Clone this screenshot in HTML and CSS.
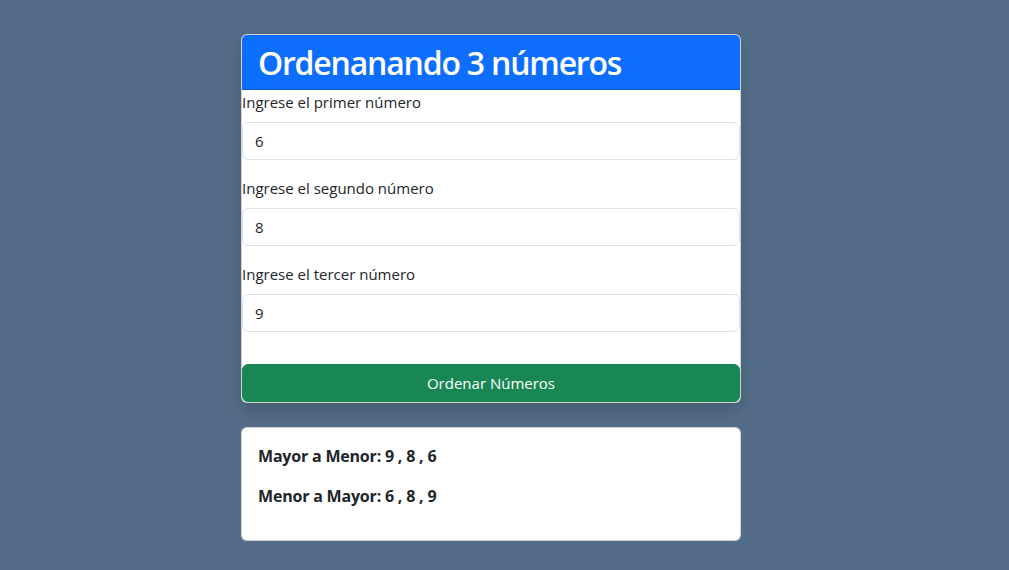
FILE: index.html
```html
<!DOCTYPE html>
<html lang="es">
<head>
<meta charset="utf-8">
<title>Ordenar números</title>
<link rel="stylesheet" href="styles.css">
</head>
<body>
<main class="wrap">
  <form class="card card-shadow">
    <div class="card-header">
      <h1 class="title">Ordenanando 3 números</h1>
    </div>
    <div class="card-body">
      <label class="label" for="n1">Ingrese el primer número</label>
      <input class="input" id="n1" type="text" value="6">
      <label class="label" for="n2">Ingrese el segundo número</label>
      <input class="input" id="n2" type="text" value="8">
      <label class="label" for="n3">Ingrese el tercer número</label>
      <input class="input" id="n3" type="text" value="9">
      <button class="btn" type="button">Ordenar Números</button>
    </div>
  </form>
  <section class="card result">
    <p class="line">Mayor a Menor: 9 , 8 , 6</p>
    <p class="line">Menor a Mayor: 6 , 8 , 9</p>
  </section>
</main>
</body>
</html>
```
FILE: styles.css
```css
* { box-sizing: border-box; }
html, body { margin: 0; padding: 0; }
body {
  background: #536d88;
  font-family: "Open Sans", "Noto Sans", sans-serif;
  font-size: 15px;
  line-height: 24px;
  color: #212529;
  height: 570px;
}
.wrap {
  width: 500px;
  margin: 0 0 0 241px;
  padding-top: 34px;
  display: flex;
  flex-direction: column;
  gap: 24px;
}
.card {
  background: #fff;
  border: 1px solid rgba(0,0,0,.175);
  border-radius: 6px;
  margin: 0;
}
.card-shadow { box-shadow: 0 8px 16px rgba(0,0,0,.15); }
.card-header {
  background: #0d6efd;
  border-bottom: 1px solid rgba(0,0,0,.175);
  border-radius: 5px 5px 0 0;
  height: 55px;
  padding: 0 16px;
  display: flex;
  align-items: center;
}
.title {
  margin: 0;
  color: #fff;
  font-size: 32px;
  font-weight: 600;
  line-height: 1.2;
  letter-spacing: -1.2px;
  padding-top: 2px;
}
.card-body {
  display: flex;
  flex-direction: column;
}
.label {
  display: block;
  margin-bottom: 8px;
}
.input {
  font: inherit;
  color: #212529;
  height: 38px;
  padding: 6px 12px;
  border: 1px solid #dee2e6;
  border-radius: 6px;
  margin-bottom: 16px;
  width: 100%;
}
.btn {
  font: inherit;
  margin-top: 16px;
  height: 38px;
  background: #198754;
  color: #fff;
  border: 1px solid #198754;
  border-radius: 6px;
  cursor: pointer;
}
.result { padding: 16px; }
.line {
  margin: 0 0 16px;
  font-size: 16px;
  font-weight: 700;
  letter-spacing: -0.2px;
}
```
